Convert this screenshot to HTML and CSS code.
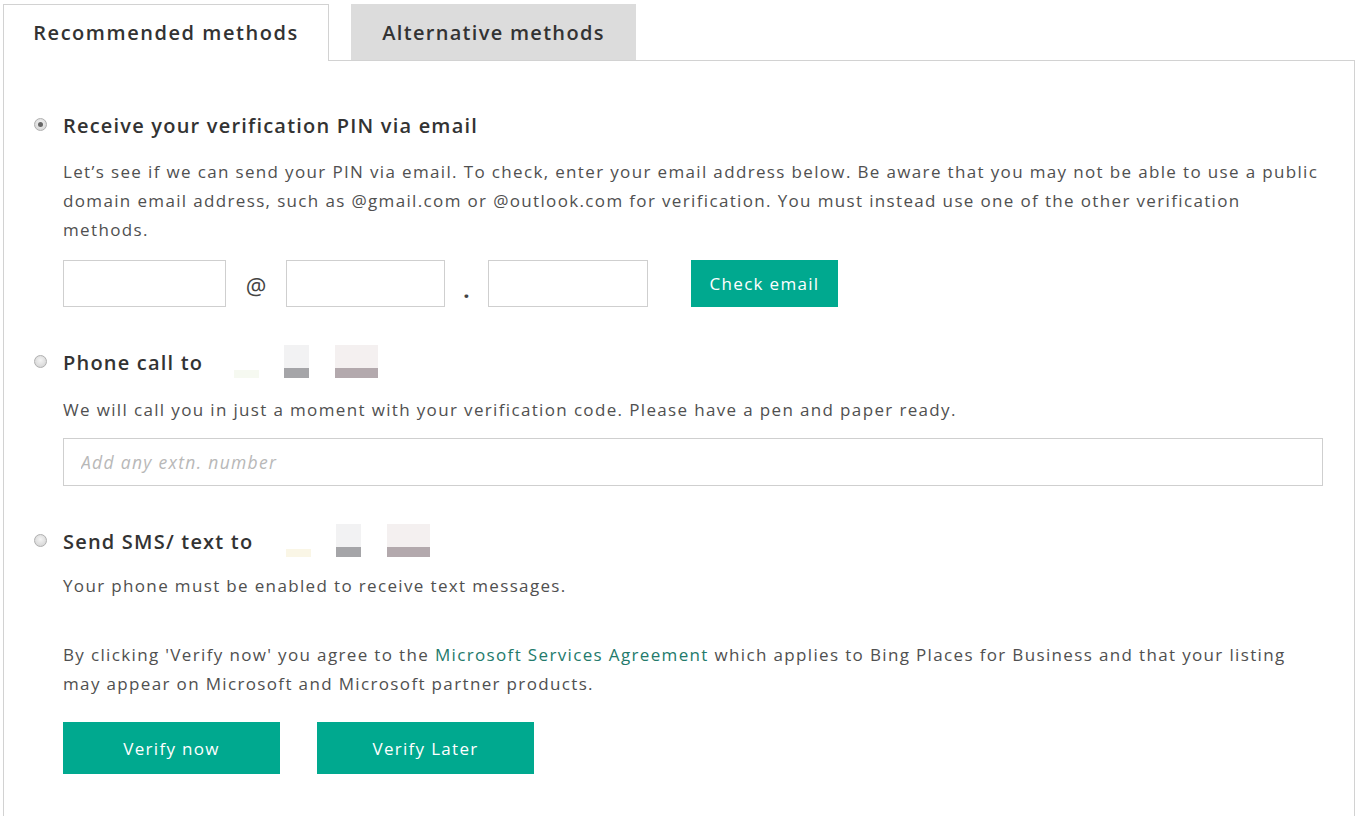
FILE: index.html
```html
<!DOCTYPE html>
<html lang="en">
<head>
<meta charset="utf-8">
<title>Verify</title>
<link rel="stylesheet" href="styles.css">
</head>
<body>
<div class="wrap">
  <div class="tabs">
    <div class="tab active">Recommended methods</div>
    <div class="tab">Alternative methods</div>
  </div>
  <div class="panel">
    <section class="option opt-email">
      <label class="opt-head"><span class="radio checked"></span>Receive your verification PIN via email</label>
      <p class="desc">Let’s see if we can send your PIN via email. To check, enter your email address below. Be aware that you may not be able to use a public domain email address, such as @gmail.com or @outlook.com for verification. You must instead use one of the other verification methods.</p>
      <div class="email-row">
        <input class="field f1" type="text">
        <span class="sep at">@</span>
        <input class="field f2" type="text">
        <span class="sep dot">.</span>
        <input class="field f3" type="text">
        <button class="btn btn-check">Check email</button>
      </div>
    </section>

    <section class="option opt-phone">
      <label class="opt-head"><span class="radio"></span>Phone call to
        <span class="blur b-a"></span><span class="blur b-b"></span><span class="blur b-c"></span>
      </label>
      <p class="desc">We will call you in just a moment with your verification code. Please have a pen and paper ready.</p>
      <input class="field ext" type="text" placeholder="Add any extn. number">
    </section>

    <section class="option opt-sms">
      <label class="opt-head"><span class="radio"></span>Send SMS/ text to
        <span class="blur b-a sms"></span><span class="blur b-b"></span><span class="blur b-c"></span>
      </label>
      <p class="desc">Your phone must be enabled to receive text messages.</p>
    </section>

    <p class="desc agree">By clicking 'Verify now' you agree to the <a href="#">Microsoft Services Agreement</a> which applies to Bing Places for Business and that your listing may appear on Microsoft and Microsoft partner products.</p>

    <div class="actions">
      <button class="btn btn-big">Verify now</button>
      <button class="btn btn-big">Verify Later</button>
    </div>
  </div>
</div>
</body>
</html>
```

FILE: styles.css
```css
html, body {
  margin: 0;
  padding: 0;
  background: #fff;
}
body {
  font-family: "Open Sans", "Noto Sans", sans-serif;
  color: #505050;
  overflow: hidden;
}
.wrap {
  padding: 4px 0 0 3px;
  width: 1352px;
}
.tabs {
  display: flex;
  gap: 22px;
  height: 57px;
  position: relative;
  z-index: 1;
}
.tab {
  box-sizing: border-box;
  height: 56px;
  display: flex;
  align-items: center;
  justify-content: center;
  font-size: 20px;
  font-weight: 600;
  letter-spacing: 1.3px;
  color: #333;
  background: #dcdcdc;
  width: 285px;
}
.tab.active {
  width: 326px;
  height: 57px;
  background: #fff;
  border: 1px solid #d2d2d2;
  border-bottom: none;
  padding-bottom: 1px;
  letter-spacing: 1.55px;
}
.panel {
  border: 1px solid #d2d2d2;
  margin-top: -1px;
  min-height: 800px;
  padding: 50px 30px 0 59px;
}
.option { margin: 0; }
.opt-head {
  display: flex;
  align-items: center;
  height: 28px;
  font-size: 20px;
  font-weight: 600;
  letter-spacing: 1.2px;
  color: #333;
  position: relative;
}
.radio {
  position: absolute;
  left: -29px;
  top: 7px;
  width: 13px;
  height: 13px;
  box-sizing: border-box;
  border-radius: 50%;
  border: 1px solid #b0b0b0;
  background: radial-gradient(circle at 50% 40%, #f4f4f4, #cfcfcf);
}
.radio.checked::after {
  content: "";
  position: absolute;
  left: 3px;
  top: 3px;
  width: 5px;
  height: 5px;
  border-radius: 50%;
  background: #666;
}
.desc {
  margin: 18px 0 0;
  font-size: 17px;
  letter-spacing: 1.35px;
  line-height: 29px;
  color: #505050;
}
.email-row {
  display: flex;
  align-items: stretch;
  margin-top: 16px;
  height: 47px;
}
.field {
  box-sizing: border-box;
  border: 1px solid #cfcfcf;
  height: 47px;
  margin: 0;
  padding: 0 16px;
  font-family: inherit;
  font-size: 17px;
  outline: none;
  background: #fff;
}
.f1 { width: 163px; }
.f2 { width: 159px; }
.f3 { width: 160px; }
.sep {
  display: flex;
  align-items: center;
  justify-content: center;
  color: #444;
}
.at { width: 60px; padding-top: 4px; font-size: 23px; }
.dot { width: 43px; align-items: flex-end; padding-bottom: 3px; font-size: 22px; font-weight: 700; }
.btn {
  border: none;
  background: #00a98f;
  color: #fff;
  font-family: inherit;
  font-size: 17px;
  letter-spacing: 1.3px;
  cursor: pointer;
  padding: 0;
}
.btn-check {
  margin-left: 43px;
  width: 147px;
}
.opt-phone { margin-top: 41px; }
.opt-phone .desc { margin-top: 19px; }
.blur {
  display: inline-block;
  align-self: flex-end;
  margin-bottom: -2px;
}
.b-a {
  width: 25px;
  height: 8px;
  margin-left: 31px;
  background: #f6f9f1;
}
.b-a.sms { margin-left: 33px; background: #faf6e6; }
.b-b {
  width: 25px;
  height: 33px;
  margin-left: 25px;
  background: linear-gradient(#f2f2f3 0 70%, #a5a5a8 70%);
}
.b-c {
  width: 43px;
  height: 33px;
  margin-left: 26px;
  background: linear-gradient(#f4f0f0 0 70%, #b3a9ad 70%);
}
.ext {
  display: block;
  width: 1260px;
  margin-top: 14px;
  height: 48px;
  padding-left: 17px;
}
.ext::placeholder {
  color: #b8b8b8;
  font-style: italic;
  font-size: 17.5px;
  letter-spacing: 1.3px;
}
.opt-sms { margin-top: 41px; }
.opt-sms .desc { margin-top: 16px; }
.agree { margin-top: 40px; }
.agree a {
  color: #237a6b;
  text-decoration: none;
}
.actions {
  display: flex;
  gap: 37px;
  margin-top: 24px;
}
.btn-big {
  width: 217px;
  height: 52px;
}
```
